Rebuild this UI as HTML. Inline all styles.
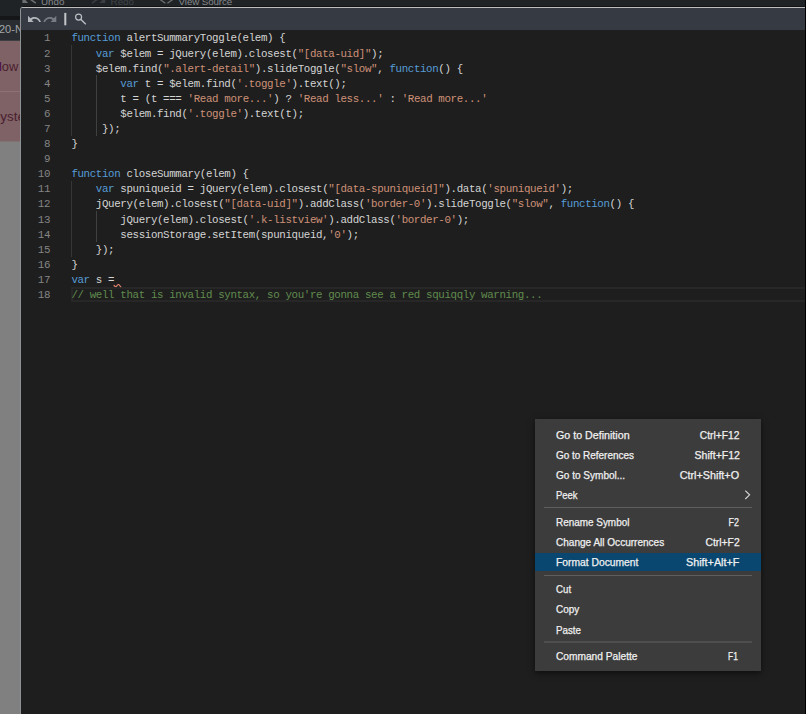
<!DOCTYPE html>
<html><head><meta charset="utf-8"><style>
*{box-sizing:border-box;margin:0;padding:0}
html,body{width:806px;height:714px;overflow:hidden;background:#808080;font-family:"Liberation Sans",sans-serif}
#page{position:relative;width:806px;height:714px;overflow:hidden;background:#808080}
#topbar{position:absolute;left:0;top:0;width:806px;height:16px;background:#1f2326;overflow:hidden}
#topbar2{position:absolute;left:0;top:16px;width:22px;height:4px;background:#141617}
#tabrow{position:absolute;left:0;top:20px;width:22px;height:21px;background:#292d31;border-bottom:1px solid #3c4043;color:#a3a6a9;font-size:11px;line-height:13px;padding-top:3px;text-indent:-1px;white-space:nowrap;overflow:hidden}
#pink{position:absolute;left:0;top:41px;width:22px;height:100px;background:#7f6265;overflow:hidden}
#pink .div{position:absolute;left:0;top:50px;width:22px;height:1px;background:#8c7277}
#pink .t{position:absolute;color:#4a2030;font-size:13.5px;line-height:16px;white-space:nowrap}
.tbtxt{position:absolute;top:-4px;color:#85888b;font-size:9.8px;line-height:12px;white-space:nowrap}
#dlg{position:absolute;left:20px;top:7px;width:791px;height:720px;background:#1e1e1e;border:1px solid #8e9194;border-top-color:#bdbdbd;border-radius:3px 0 0 0;overflow:hidden}
#tool{position:absolute;left:0;top:0;width:100%;height:22px;background:#353a43}
#code{position:absolute;left:0;top:0;width:806px;font-family:"Liberation Mono",monospace;font-size:10.8px;color:#d4d4d4;white-space:pre;letter-spacing:-0.364px}
.ln{position:absolute;left:0;width:806px;height:15px;line-height:15px;white-space:pre}
.num{position:absolute;left:0;width:50px;text-align:right;color:#858585}
.src{position:absolute;left:71.4px}
.k{color:#569cd6}.s{color:#ce9178}.c{color:#608b4e}
.guide{position:absolute;width:1px;background:#404040}
#cur{position:absolute;left:71px;top:287px;width:740px;height:15px;border-top:2px solid #272727;border-bottom:2px solid #272727;border-left:2px solid #272727}
#menu{position:absolute;left:535px;top:419px;width:226px;height:252px;background:#3c3c3c;box-shadow:0 2px 6px rgba(0,0,0,.55);color:#f0f0f0;font-size:10.2px;line-height:12px;-webkit-text-stroke:0.25px #f0f0f0}
.ml{position:absolute;white-space:nowrap;transform-origin:0 0}
.mr{position:absolute;white-space:nowrap;transform-origin:100% 0}
.selbg{position:absolute;left:0;width:226px;height:18px;background:#094771}
.sep{position:absolute;left:8.5px;width:208.5px;height:1px;background:#5e5e5e}
</style></head>
<body><div id="page">
<div id="topbar">
<svg style="position:absolute;left:0;top:0" width="260" height="6" viewBox="0 0 260 6">
<path d="M22.4 -1 L22.4 2.9 L28.2 2.9 L24.5 -1 Z" fill="#6c6f72"/>
<path d="M30 -1 L35.8 3.2" stroke="#6c6f72" stroke-width="1.6" fill="none"/>
<path d="M105.3 -1 L105.3 2.9 L99.5 2.9 L103.2 -1 Z" fill="#3b3f43"/>
<path d="M97.7 -1 L91.9 3.2" stroke="#3b3f43" stroke-width="1.6" fill="none"/>
<path d="M160 -0.5 L165.4 3.2 M172.8 -0.5 L167.4 3.2" stroke="#6c6f72" stroke-width="1.3" fill="none"/>
</svg>
<span class="tbtxt" style="left:41px">Undo</span>
<span class="tbtxt" style="left:110.6px;color:#404448">Redo</span>
<span class="tbtxt" style="left:178.6px;letter-spacing:-0.12px">View Source</span>
</div>
<div id="topbar2"></div>
<div id="tabrow">20-N</div>
<div id="pink"><div class="div"></div><span class="t" style="left:-0.9px;top:18px;transform-origin:0 0;transform:scaleX(0.95)"><span style="color:#4a0a50">l</span>ow</span><span class="t" style="left:0.2px;top:68px">yste</span></div>
<div style="position:absolute;left:23px;top:6px;width:783px;height:1px;background:#111315"></div>
<div id="dlg"><div id="tool"></div></div>
<div style="position:absolute;left:0;top:141px;width:20px;height:1px;background:#7f7273"></div>

<svg style="position:absolute;left:24px;top:8px" width="72" height="22" viewBox="24 8 72 22">
<path d="M28 15.8 L28 21.9 L33.7 21.9 L31.7 19.9 C33.9 18.1 37.5 18.3 39.2 21.9 L41 21.9 C39.2 16.4 33.6 15.8 30.4 18.3 Z" fill="#b2b5ba"/>
<path d="M56.3 15.8 L56.3 21.9 L50.6 21.9 L52.6 19.9 C50.4 18.1 46.8 18.3 45.1 21.9 L43.3 21.9 C45.1 16.4 50.7 15.8 53.9 18.3 Z" fill="#787c84"/>
<rect x="64.3" y="12.9" width="2" height="12.4" fill="#c4c6c9"/>
<circle cx="78.6" cy="17.1" r="3.0" fill="none" stroke="#bcbfc4" stroke-width="1.2"/>
<path d="M80.7 19.3 L85.8 24.3" stroke="#bcbfc4" stroke-width="1.4" fill="none"/>
</svg>

<div id="cur"></div>

<div class="guide" style="left:71px;top:45px;height:91px;background:#363636"></div>
<div class="guide" style="left:96px;top:75px;height:61px"></div>
<div class="guide" style="left:71px;top:181px;height:76px;background:#363636"></div>
<div class="guide" style="left:96px;top:211px;height:31px"></div>

<div id="code">
<div class="ln" style="top:31px"><span class="num">1</span><span class="src"><span class="k">function</span> alertSummaryToggle(elem) {</span></div>
<div class="ln" style="top:47px"><span class="num">2</span><span class="src">    <span class="k">var</span> $elem = jQuery(elem).closest(<span class="s">"[data-uid]"</span>);</span></div>
<div class="ln" style="top:62px"><span class="num">3</span><span class="src">    $elem.find(<span class="s">".alert-detail"</span>).slideToggle(<span class="s">"slow"</span>, <span class="k">function</span>() {</span></div>
<div class="ln" style="top:77px"><span class="num">4</span><span class="src">        <span class="k">var</span> t = $elem.find(<span class="s">'.toggle'</span>).text();</span></div>
<div class="ln" style="top:92px"><span class="num">5</span><span class="src">        t = (t === <span class="s">'Read more...'</span>) ? <span class="s">'Read less...'</span> : <span class="s">'Read more...'</span></span></div>
<div class="ln" style="top:107px"><span class="num">6</span><span class="src">        $elem.find(<span class="s">'.toggle'</span>).text(t);</span></div>
<div class="ln" style="top:122px"><span class="num">7</span><span class="src">     });</span></div>
<div class="ln" style="top:137px"><span class="num">8</span><span class="src">}</span></div>
<div class="ln" style="top:152px"><span class="num">9</span><span class="src"></span></div>
<div class="ln" style="top:167px"><span class="num">10</span><span class="src"><span class="k">function</span> closeSummary(elem) {</span></div>
<div class="ln" style="top:182px"><span class="num">11</span><span class="src">    <span class="k">var</span> spuniqueid = jQuery(elem).closest(<span class="s">"[data-spuniqueid]"</span>).data(<span class="s">'spuniqueid'</span>);</span></div>
<div class="ln" style="top:197px"><span class="num">12</span><span class="src">    jQuery(elem).closest(<span class="s">"[data-uid]"</span>).addClass(<span class="s">'border-0'</span>).slideToggle(<span class="s">"slow"</span>, <span class="k">function</span>() {</span></div>
<div class="ln" style="top:213px"><span class="num">13</span><span class="src">        jQuery(elem).closest(<span class="s">'.k-listview'</span>).addClass(<span class="s">'border-0'</span>);</span></div>
<div class="ln" style="top:228px"><span class="num">14</span><span class="src">        sessionStorage.setItem(spuniqueid,<span class="s">'0'</span>);</span></div>
<div class="ln" style="top:243px"><span class="num">15</span><span class="src">    });</span></div>
<div class="ln" style="top:258px"><span class="num">16</span><span class="src">}</span></div>
<div class="ln" style="top:273px"><span class="num">17</span><span class="src"><span class="k">var</span> s =</span></div>
<div class="ln" style="top:288px"><span class="num">18</span><span class="src"><span class="c">// well that is invalid syntax, so you&#x27;re gonna see a red squiqqly warning...</span></span></div>
</div>
<svg style="position:absolute;left:112px;top:282px" width="12" height="8" viewBox="0 0 12 8"><path d="M1.9 2.9 C2.3 4.8 4 5 5 3.6 C5.8 2.3 6.8 2.1 7.5 3.2 C8 4 8.5 4.8 9.2 4.8" fill="none" stroke="#e3826c" stroke-width="1.2"/></svg>
<div id="menu">
<span class="ml" style="left:21.20px;top:11.0px;transform:scaleX(1.0480)">Go to Definition</span>
<span class="mr" style="right:21.50px;top:11.0px;transform:scaleX(1.0063)">Ctrl+F12</span>
<span class="ml" style="left:21.20px;top:31.0px;transform:scaleX(0.9767)">Go to References</span>
<span class="mr" style="right:21.50px;top:31.0px;transform:scaleX(1.0318)">Shift+F12</span>
<span class="ml" style="left:21.20px;top:51.0px;transform:scaleX(0.9851)">Go to Symbol...</span>
<span class="mr" style="right:21.50px;top:51.0px;transform:scaleX(1.0583)">Ctrl+Shift+O</span>
<span class="ml" style="left:21.20px;top:71.0px;transform:scaleX(0.9265)">Peek</span>
<span class="ml" style="left:21.00px;top:98.0px;transform:scaleX(0.9746)">Rename Symbol</span>
<span class="mr" style="right:21.90px;top:98.0px;transform:scaleX(0.8750)">F2</span>
<span class="ml" style="left:21.20px;top:118.0px;transform:scaleX(0.9848)">Change All Occurrences</span>
<span class="mr" style="right:21.50px;top:118.0px;transform:scaleX(1.0143)">Ctrl+F2</span>
<div class="selbg" style="top:134px"></div>
<span class="ml" style="left:21.00px;top:138.0px;transform:scaleX(1.0110)">Format Document</span>
<span class="mr" style="right:21.50px;top:138.0px;transform:scaleX(1.0597)">Shift+Alt+F</span>
<span class="ml" style="left:21.20px;top:165.0px;transform:scaleX(0.9507)">Cut</span>
<span class="ml" style="left:21.20px;top:185.0px;transform:scaleX(0.9759)">Copy</span>
<span class="ml" style="left:21.30px;top:206.0px;transform:scaleX(0.9574)">Paste</span>
<span class="ml" style="left:21.20px;top:232.0px;transform:scaleX(0.9988)">Command Palette</span>
<span class="mr" style="right:23.40px;top:232.0px;transform:scaleX(0.8235)">F1</span>
<div class="sep" style="top:88px"></div>
<div class="sep" style="top:156px"></div>
<div class="sep" style="top:222px;height:2px;background:#4e4e4e"></div>
<svg style="position:absolute;left:205px;top:69px" width="12" height="14" viewBox="740 488 12 14"><path d="M745.3 490.6 L749.6 494.8 L745.3 499" fill="none" stroke="#d8d8d8" stroke-width="1.1"/></svg>
</div>
<div style="position:absolute;left:805px;top:0;width:1px;height:714px;background:#000"></div>
</div></body></html>
